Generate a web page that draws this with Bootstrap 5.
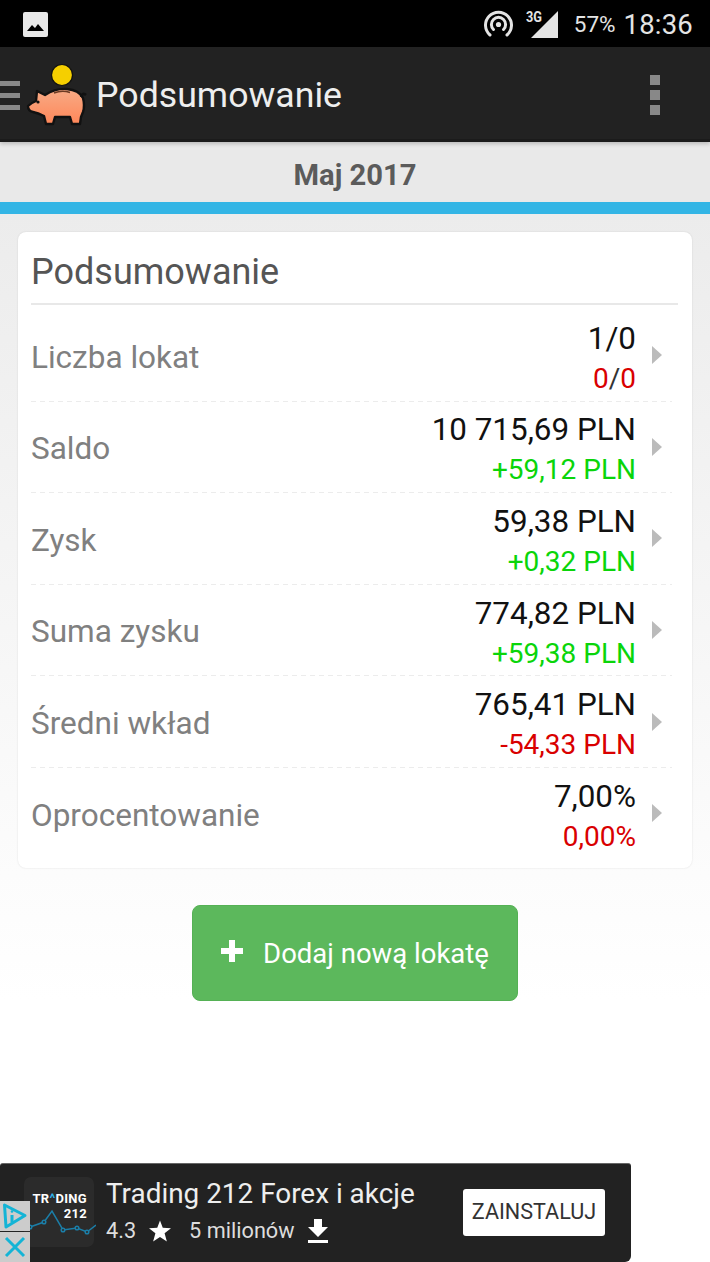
<!DOCTYPE html>
<html lang="pl">

<head>
  <meta charset="UTF-8" />
  <meta name="viewport" content="width=device-width, initial-scale=1" />
  <title>Podsumowanie</title>
  <link href="https://cdn.jsdelivr.net/npm/bootstrap@5.3.3/dist/css/bootstrap.min.css" rel="stylesheet">
  <style>
    html, body { height: 100%; }
    body { font-family: Roboto, "Liberation Sans", sans-serif; background: #fff; overflow: hidden; }
    .screen { width: 710px; height: 1262px; position: relative; overflow: hidden; }

    .status-bar { height: 47px; background: #000; color: #e4e4e4; padding: 2px 17px 0 23px; }
    .status-net { margin-right: 17px; }
    .status-pct { font-size: 22.500px; margin-left: 15px; }
    .status-time { font-size: 27.500px; margin-left: 8px; letter-spacing: .2px; }
    .status-3g { font-size: 15px; font-weight: 700; position: absolute; left: 526px; top: 10px; line-height: 1; transform: scaleX(.85); transform-origin: left; }

    .app-bar { height: 95px; background: #222; border-bottom: 3px solid #1b1b1b; box-shadow: 0 2px 4px rgba(0,0,0,.2); position: relative; z-index: 2; padding: 4px 50px 0 0; }
    .burger { width: 20px; margin-right: 6px; }
    .burger span { display: block; height: 5px; background: #888; margin: 7px 0; }
    .app-title { font-size: 35.700px; color: #eee; margin-left: 8px; line-height: 1; padding-top: 2px; }
    .kebab span { display: block; width: 10px; height: 10px; background: #888; margin: 5px 0; }

    .month-bar { height: 60px; background: #e9e9e9; color: #5b5b5b; font-size: 29.200px; font-weight: 700; padding-top: 8px; }
    .accent-bar { height: 12px; background: #33b5e5; }
    .page-body { height: 1048px; background: linear-gradient(#ececec, #fff 75%); padding: 18px 18px 0; }

    .sum-card { border: 0; border-radius: 8px; padding: 14px 14px 8px 13px; box-shadow: 0 0 2px rgba(0,0,0,.12); }
    .sum-title { font-size: 36px; color: #555; line-height: 52px; height: 59px; border-bottom: 2px solid #e8e8e8; margin-bottom: 5px; }
    .sum-row { height: 91.600px; padding: 3px 6px 0 0; margin-right: 6px; background: repeating-linear-gradient(90deg, #ececec 0 5px, transparent 5px 9px) left bottom / 100% 1px no-repeat; }
    .sum-row:last-child { background: none; }
    .sum-label { font-size: 31.500px; color: #808080; }
    .sum-figures { padding-top: 2px; }
    .sum-value { font-size: 31.400px; line-height: 40px; color: #111; text-align: right; }
    .sum-delta { font-size: 28px; line-height: 39px; text-align: right; color: #333; }
    .txt-up { color: #0ad50a; }
    .txt-down { color: #d90000; }
    .row-arrow { width: 0; height: 0; border-style: solid; border-width: 9px 0 9px 10px; border-color: transparent transparent transparent #bbb; margin: -4px 4px 0 16px; }

    .btn-add { width: 326px; height: 96px; margin: 37px auto 0; padding-top: 8px; background: #5cb85c; border: 1px solid #55b155; border-radius: 8px; color: #fff; font-size: 27.500px; }
    .btn-add:hover { background: #5cb85c; color: #fff; }
    .btn-add svg { margin-top: -6px; }

    .ad-banner { position: absolute; left: 0; bottom: 0; width: 631px; height: 99px; background: #222; border-top: 1px solid #666; border-radius: 3px 3px 6px 0; color: #eee; z-index: 3; padding: 13px 26px 0 24px; }
    .ad-tile { width: 70px; height: 70px; background: #2b2b2b; border-radius: 7px; position: relative; }
    .ad-logo { position: absolute; right: 7px; top: 14px; font-size: 13px; font-weight: 700; line-height: 15px; text-align: right; color: #fff; letter-spacing: .3px; white-space: nowrap; }
    .ad-logo i { font-style: normal; color: #2fb4ea; }
    .ad-chart { position: absolute; left: 0; top: 0; }
    .ad-title { font-size: 27.900px; line-height: 34px; }
    .ad-meta { font-size: 21.700px; line-height: 30px; margin-top: 5px; color: #ddd; }
    .ad-star { margin: 0 18px 0 13px; }
    .ad-dl { margin-left: 12px; }
    .ad-install { width: 142px; height: 47px; background: #fff; color: #333; font-size: 21.600px; border-radius: 3px; margin-top: 12px; padding: 0; border: 0; }
    .ad-side { position: absolute; left: 0; bottom: 0; width: 30px; height: 61px; z-index: 4; }
    .ad-side div { height: 30px; background: #ccc; }
    .ad-side div + div { margin-top: 1px; }
  </style>
</head>

<body>
  <div class="screen d-flex flex-column">
    <div class="status-bar d-flex align-items-center">
      <svg width="25" height="25" viewBox="0 0 25 25">
        <rect width="25" height="25" rx="2" fill="#e8e8e8"/>
        <path d="M4 19 L9 13 L12 16 L15 12 L21 19Z" fill="#000"/>
      </svg>
      <div class="ms-auto d-flex align-items-center">
        <svg class="status-net" width="29" height="29" viewBox="0 0 29 29" fill="none" stroke="#e4e4e4" stroke-width="3" stroke-linecap="round">
          <circle cx="14.500" cy="14.500" r="2.600" fill="#e4e4e4" stroke="none"/>
          <path d="M9.500 19.500 A7.100 7.100 0 1 1 19.500 19.500"/>
          <path d="M6 25 A13 13 0 1 1 23 25"/>
        </svg>
        <span class="status-3g">3G</span>
        <svg width="29" height="29" viewBox="0 0 29 29">
          <path d="M1 28 L28 1 V28Z" fill="#e4e4e4"/>
        </svg>
        <span class="status-pct">57%</span>
        <span class="status-time">18:36</span>
      </div>
    </div>

    <div class="app-bar d-flex align-items-center">
      <div class="burger"><span></span><span></span><span></span></div>
      <svg width="62" height="66" viewBox="26 62 62 66">
        <defs>
          <linearGradient id="pigFill" x1="0" y1="0" x2="0" y2="1">
            <stop offset="0" stop-color="#f7ab86"/>
            <stop offset="1" stop-color="#ff8759"/>
          </linearGradient>
        </defs>
        <circle cx="62" cy="75" r="10.500" fill="#f5cf00" stroke="#111" stroke-width="1.200"/>
        <path d="M28 106 Q31 103 36 101 L37 91 L45 95 Q56 88 67 89 Q79 90 83 98 Q85 106 83 112 L81 117 L80 124 L72 124 L70 117 L55 117 L53 124 L46 124 L44 116 Q38 113 33 112 Q28 111 28 106Z" fill="url(#pigFill)" stroke="#111" stroke-width="2.400" stroke-linejoin="round"/>
        <path d="M54 93 Q62 90 70 92.500" fill="none" stroke="#6b3a22" stroke-width="1.500"/>
        <circle cx="38" cy="102" r="1.600" fill="#111"/>
        <path d="M81 97 Q83 92 86 95" fill="none" stroke="#111" stroke-width="2.500"/>
      </svg>
      <div class="app-title">Podsumowanie</div>
      <div class="kebab ms-auto"><span></span><span></span><span></span></div>
    </div>

    <div class="month-bar d-flex align-items-center justify-content-center">Maj 2017</div>
    <div class="accent-bar"></div>

    <div class="page-body">
      <div class="card sum-card">
        <div class="sum-title">Podsumowanie</div>
        <div id="sumRows"></div>
      </div>
      <a href="#" class="btn btn-add d-flex align-items-center justify-content-center">
        <svg width="22" height="22" viewBox="0 0 22 22" class="me-3 flex-shrink-0">
          <path d="M8 0 H14 V8 H22 V14 H14 V22 H8 V14 H0 V8 H8Z" fill="#fff"/>
        </svg>
        <span class="ms-1">Dodaj nową lokatę</span>
      </a>
    </div>

    <div class="ad-banner d-flex">
      <div class="ad-tile flex-shrink-0">
        <div class="ad-logo">TR<i>^</i>DING<br>212</div>
        <svg class="ad-chart" width="72" height="70" viewBox="0 0 72 70" fill="none" stroke="#1b7ea8" stroke-width="1.500">
          <path d="M0 53 L6 50 L20 45 L28 34 L39 53 L53 51 L63 55 L72 48"/>
          <g fill="#2b2b2b">
            <circle cx="6" cy="50" r="1.800"/><circle cx="20" cy="45" r="1.800"/><circle cx="39" cy="53" r="1.800"/><circle cx="53" cy="51" r="1.800"/><circle cx="63" cy="55" r="1.800"/>
          </g>
        </svg>
      </div>
      <div class="ms-2 ps-1 flex-grow-1">
        <div class="ad-title">Trading 212 Forex i akcje</div>
        <div class="ad-meta d-flex align-items-center">
          <span>4.3</span>
          <svg class="ad-star" width="22" height="22" viewBox="0 0 24 23"><path d="M12 0 L15 8 L24 8.500 L17 14 L19.500 23 L12 18 L4.500 23 L7 14 L0 8.500 L9 8Z" fill="#fff"/></svg>
          <span>5 milionów</span>
          <svg class="ad-dl" width="22" height="25" viewBox="0 0 22 25"><path d="M7 0 H15 V8 H21 L11 18 L1 8 H7Z M1 21 H21 V24 H1Z" fill="#fff"/></svg>
        </div>
      </div>
      <button class="ad-install flex-shrink-0">ZAINSTALUJ</button>
    </div>

    <div class="ad-side">
      <div>
        <svg width="30" height="30" viewBox="0 0 30 30" fill="none" stroke="#14b4d6" stroke-width="3" stroke-linejoin="round">
          <path d="M4.500 4 L25 14.500 L6 26 Z"/>
          <path d="M12 14 V21.500"/>
          <circle cx="12" cy="10.500" r="1.300" fill="#14b4d6" stroke="none"/>
        </svg>
      </div>
      <div>
        <svg width="30" height="30" viewBox="0 0 30 30" fill="none" stroke="#14b4d6" stroke-width="3">
          <path d="M6 6 L24 24 M24 6 L6 24"/>
        </svg>
      </div>
    </div>
  </div>

  <script src="https://cdn.jsdelivr.net/npm/bootstrap@5.3.3/dist/js/bootstrap.bundle.min.js"></script>
  <script>
    const wiersze = [
      { nazwa: 'Liczba lokat', wartosc: '1/0', zmiana: '<span class="txt-down">0</span>/<span class="txt-down">0</span>' },
      { nazwa: 'Saldo', wartosc: '10 715,69 PLN', zmiana: '<span class="txt-up">+59,12 PLN</span>' },
      { nazwa: 'Zysk', wartosc: '59,38 PLN', zmiana: '<span class="txt-up">+0,32 PLN</span>' },
      { nazwa: 'Suma zysku', wartosc: '774,82 PLN', zmiana: '<span class="txt-up">+59,38 PLN</span>' },
      { nazwa: 'Średni wkład', wartosc: '765,41 PLN', zmiana: '<span class="txt-down">-54,33 PLN</span>' },
      { nazwa: 'Oprocentowanie', wartosc: '7,00%', zmiana: '<span class="txt-down">0,00%</span>' }
    ];

    document.getElementById('sumRows').innerHTML = wiersze.map(w => `
      <div class="sum-row d-flex align-items-center">
        <div class="sum-label me-auto">${w.nazwa}</div>
        <div class="sum-figures">
          <div class="sum-value">${w.wartosc}</div>
          <div class="sum-delta">${w.zmiana}</div>
        </div>
        <div class="row-arrow"></div>
      </div>
    `).join('');
  </script>
</body>

</html>
